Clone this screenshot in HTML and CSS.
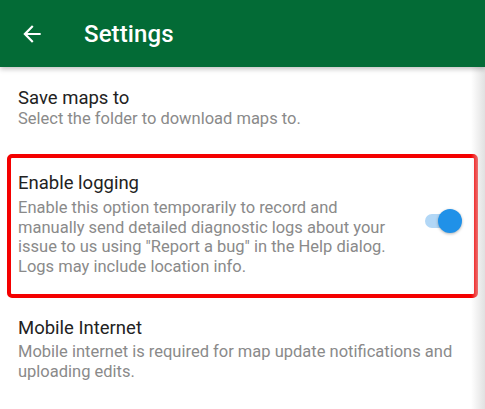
FILE: index.html
```html
<!DOCTYPE html>
<html>
<head>
<meta charset="utf-8">
<link rel="stylesheet" href="styles.css">
</head>
<body>
<div class="screen">
  <header class="appbar">
    <svg class="back" width="26" height="26" viewBox="0 0 24 24"><path d="M20 11H7.83l5.59-5.59L12 4l-8 8 8 8 1.41-1.41L7.83 13H20v-2z" fill="#fff"/></svg>
    <h1 class="title">Settings</h1>
  </header>
  <main class="list">
    <section class="pref pref-save">
      <div class="pref-text">
        <div class="pref-title">Save maps to</div>
        <div class="pref-sum">Select the folder to download maps to.</div>
      </div>
    </section>
    <section class="pref pref-highlight">
      <div class="pref-text">
        <div class="pref-title">Enable logging</div>
        <div class="pref-sum">Enable this option temporarily to record and manually send detailed diagnostic logs about your issue to us using "Report a bug" in the Help dialog. Logs may include location info.</div>
      </div>
      <div class="switch"><span class="track"></span><span class="thumb"></span></div>
    </section>
    <section class="pref pref-mobile">
      <div class="pref-text">
        <div class="pref-title">Mobile Internet</div>
        <div class="pref-sum">Mobile internet is required for map update notifications and uploading edits.</div>
      </div>
    </section>
  </main>
  <div class="edge"></div>
</div>
</body>
</html>
```
FILE: styles.css
```css
html, body { margin: 0; padding: 0; }
body { font-family: Roboto, "Noto Sans", sans-serif; background: #fff; }
.screen { position: relative; width: 485px; height: 409px; overflow: hidden; background: #fff; }
.appbar {
  height: 67px; background: #036b36; display: flex; align-items: center;
  box-shadow: 0 2px 5px rgba(0,0,0,0.25); position: relative; z-index: 2;
}
.back { margin-left: 19px; width: 26px; height: 26px; }
.title { margin: 0 0 0 39px; color: #fff; font-size: 24px; font-weight: 500; letter-spacing: 0.1px; }
.list { display: flex; flex-direction: column; }
.pref { display: flex; align-items: center; box-sizing: border-box; }
.pref-text { flex: 1; }
.pref-title { font-size: 18.5px; color: #222; line-height: 22px; }
.pref-sum { font-size: 16.5px; color: #8a8a8a; line-height: 19.5px; }
.pref-save { padding: 20px 19px 0 18px; height: 87px; align-items: flex-start; }
.pref-save .pref-sum { margin-top: 0; }
.pref-highlight {
  margin: 0 7px; border: 4px solid #f40000; border-radius: 5px;
  padding: 14px 12px 18px 7px; height: 144px;
}
.pref-highlight .pref-text { padding-right: 25px; }
.pref-highlight .pref-sum { margin-top: 4px; }
.pref-mobile { padding: 19px 19px 0 18px; align-items: flex-start; }
.pref-mobile .pref-sum { margin-top: 3px; }
.switch { position: relative; width: 37px; height: 24px; margin-bottom: 6px; }
.track { position: absolute; left: 0; top: 5px; width: 32px; height: 14px; border-radius: 7px; background: #b2d7f6; }
.thumb { position: absolute; left: 13px; top: 0; width: 24px; height: 24px; border-radius: 50%; background: #2091e8; box-shadow: 0 1px 3px rgba(0,0,0,0.3); }
.edge { position: absolute; top: 67px; right: 0; width: 14px; bottom: 0; background: linear-gradient(to right, rgba(230,230,230,0), rgba(225,225,225,1)); }
```
